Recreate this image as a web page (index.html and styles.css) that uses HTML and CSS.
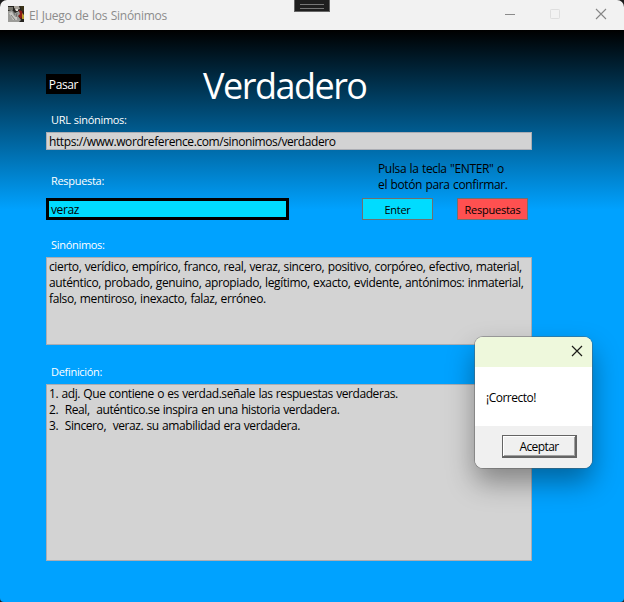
FILE: index.html
```html
<!DOCTYPE html>
<html lang="es">
<head>
<meta charset="utf-8">
<title>El Juego de los Sinónimos</title>
<link rel="stylesheet" href="styles.css">
</head>
<body>
<div class="window">
  <header class="titlebar">
    <svg class="app-icon" viewBox="0 0 16 16" width="16" height="16">
      <rect width="16" height="16" fill="#25231f"/>
      <path d="M0 1h5v3H0z" fill="#77766c"/>
      <path d="M6 0h5l1 3-3 1-3-2z" fill="#a8a39a"/>
      <path d="M12 0h4v5h-2z" fill="#3b3218"/>
      <path d="M11 4l3 1 1 4-2 4-3-3z" fill="#8c1914"/>
      <path d="M14 7l2 2v4h-2z" fill="#b99a2a"/>
      <path d="M0 5l4-1 3 3 4-2 1 3-2 2 3 4-2 2H0z" fill="#9c9c99"/>
      <path d="M1 7l3-1 2 4 3 1v3H5z" fill="#c6c5c1"/>
      <path d="M5 5l2 4M3 9l4 5M9 7l-1 4" stroke="#4c4b48" stroke-width=".6" fill="none"/>
      <path d="M7 3h3v2H8z" fill="#e1dcd5"/>
    </svg>
    <h1 class="caption">El Juego de los Sinónimos</h1>
    <div class="controls">
      <svg width="12" height="12" viewBox="0 0 12 12"><path d="M0 6.5h10" stroke="#8b8b8b"/></svg>
      <svg width="12" height="12" viewBox="0 0 12 12"><rect x=".5" y="1.5" width="9" height="9" rx=".7" fill="none" stroke="#dedede"/></svg>
      <svg width="12" height="12" viewBox="0 0 12 12"><path d="M1 1l10 10M11 1L1 11" stroke="#868686" stroke-width="1.1"/></svg>
    </div>
    <div class="grip"></div>
  </header>
  <main class="content">
    <div class="top">
      <button class="skip">Pasar</button>
      <h2 class="word">Verdadero</h2>
    </div>
    <label class="label">URL sinónimos:</label>
    <div class="box url">https://www.wordreference.com/sinonimos/verdadero</div>
    <div class="answer-row">
      <div class="answer">
        <label class="label">Respuesta:</label>
        <div class="answer-input">veraz</div>
      </div>
      <div class="actions">
        <p class="hint">Pulsa la tecla "ENTER" o<br>el botón para confirmar.</p>
        <div class="buttons">
          <button class="btn enter">Enter</button>
          <button class="btn answers">Respuestas</button>
        </div>
      </div>
    </div>
    <label class="label">Sinónimos:</label>
    <div class="box synonyms">cierto, verídico, empírico, franco, real, veraz, sincero, positivo, corpóreo, efectivo, material,<br>auténtico, probado, genuino, apropiado, legítimo, exacto, evidente, antónimos: inmaterial,<br>falso, mentiroso, inexacto, falaz, erróneo.</div>
    <label class="label">Definición:</label>
    <div class="box definition">1. adj. Que contiene o es verdad.señale las respuestas verdaderas.
2.  Real,  auténtico.se inspira en una historia verdadera.
3.  Sincero,  veraz. su amabilidad era verdadera.</div>
  </main>
</div>
<div class="dialog" role="dialog">
  <div class="dialog-head">
    <svg width="12" height="12" viewBox="0 0 12 12"><path d="M1 1l10 10M11 1L1 11" stroke="#1c1c18" stroke-width="1.2"/></svg>
  </div>
  <div class="dialog-body">¡Correcto!</div>
  <div class="dialog-foot"><button class="accept">Aceptar</button></div>
</div>
</body>
</html>
```
FILE: styles.css
```css
* { box-sizing: border-box; }

body {
  margin: 0;
  background: #1c1c1c;
  font-family: "Open Sans", "Noto Sans", sans-serif;
  font-size: 12px;
  line-height: 16px;
  letter-spacing: -0.38px;
  word-spacing: 0.6px;
  color: #000;
}

button, h1, h2, p {
  margin: 0;
  padding: 0;
  font: inherit;
  letter-spacing: inherit;
}

.window {
  width: 624px;
  height: 602px;
  border-radius: 7px 7px 4px 4px;
  overflow: hidden;
  display: flex;
  flex-direction: column;
}

.titlebar {
  position: relative;
  height: 30px;
  flex: none;
  display: flex;
  align-items: center;
  padding: 0 17px 2px 8px;
  background: #f2f2f2;
}

.caption {
  margin-left: 5px;
  margin-top: 3px;
  color: #8c8c8c;
  letter-spacing: -0.25px;
}

.controls {
  margin-left: auto;
  display: flex;
  gap: 33px;
}

.grip {
  position: absolute;
  left: 294px;
  top: 0;
  width: 36px;
  height: 12px;
  border: 1px solid #666;
  border-top: 0;
  background: #1f1f1f;
}

.grip::before {
  content: "";
  display: block;
  margin: 4px 5px 0;
  height: 3px;
  border: solid #777;
  border-width: 1px 0;
}

.content {
  flex: 1;
  padding: 36px 92px 0 46px;
  background: linear-gradient(#000 0, #00a2ff 180px);
}

.top {
  display: flex;
  height: 46px;
}

.skip {
  width: 35px;
  height: 20px;
  margin-top: 8px;
  padding-top: 2px;
  border: 0;
  background: #000;
  color: #fff;
}

.word {
  margin: -4px 0 0 122px;
  font-size: 36px;
  line-height: 48px;
  letter-spacing: -1.5px;
  color: #fff;
}

.label {
  display: block;
  padding-left: 5px;
  font-size: 11px;
  color: #fff;
  letter-spacing: -0.3px;
}

.box {
  border: 1px solid #abadb3;
  background: #d3d3d3;
  padding: 1px 2px;
  white-space: pre;
}

.url {
  height: 18px;
  margin-top: 4px;
  line-height: 16px;
  letter-spacing: -0.4px;
}

.answer-row {
  display: flex;
  height: 87px;
}

.answer {
  width: 243px;
  padding-top: 23px;
}

.answer-input {
  height: 22px;
  margin-top: 9px;
  border: 3px solid #000;
  background: #00dcff;
  padding: 1px 2px;
}

.actions {
  margin-left: 73px;
  padding-top: 11px;
}

.hint {
  margin-left: 16px;
  letter-spacing: -0.35px;
}

.buttons {
  display: flex;
  gap: 24px;
  margin-top: 5px;
}

.btn {
  width: 71px;
  height: 22px;
  padding-top: 2px;
  border: 1px solid #707070;
  font-size: 11px;
  letter-spacing: -0.25px;
  color: #000;
}

.enter { background: #00dcff; }
.answers { background: #ff5050; }

.synonyms {
  height: 88px;
  margin: 4px 0 19px;
}

.definition {
  height: 177px;
  margin-top: 4px;
  letter-spacing: -0.42px;
}

.dialog {
  position: absolute;
  left: 475px;
  top: 337px;
  width: 117px;
  height: 131px;
  border-radius: 8px;
  overflow: hidden;
  display: flex;
  flex-direction: column;
  background: #fff;
  box-shadow: 0 0 0 1px rgba(90, 90, 90, .45), 0 14px 28px rgba(0, 0, 0, .38);
}

.dialog-head {
  height: 30px;
  display: flex;
  justify-content: flex-end;
  align-items: center;
  padding: 0 9px 2px 0;
  background: #eef8dc;
}

.dialog-body {
  height: 59px;
  padding: 23px 0 0 11px;
  letter-spacing: -0.5px;
}

.dialog-foot {
  flex: 1;
  padding: 9px 0 0 27px;
  background: #f0f0f0;
}

.accept {
  display: block;
  width: 75px;
  height: 23px;
  border: 1px solid #646464;
  border-right-width: 2px;
  border-bottom-width: 2px;
  padding-top: 1px;
  background: #f0f0f0;
  box-shadow: inset 1px 1px #fff, inset -1px -1px #a0a0a0;
  letter-spacing: -0.6px;
}
```
